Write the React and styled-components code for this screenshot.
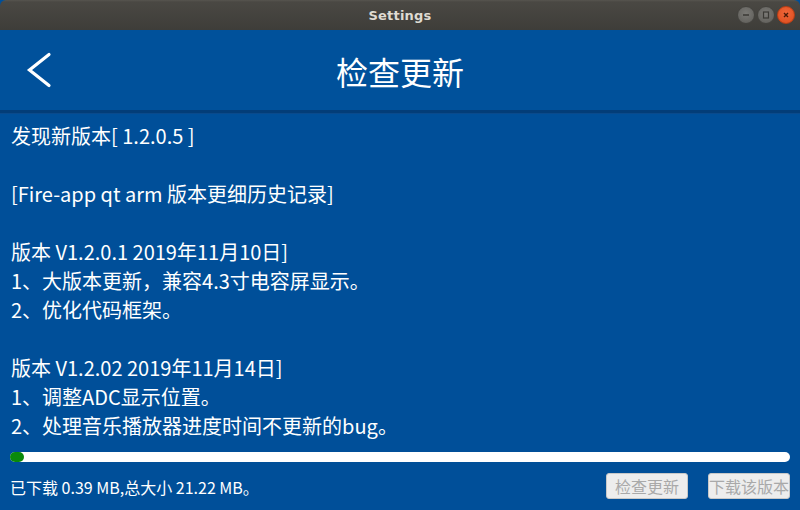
import React from "react";
import styled, { createGlobalStyle } from "styled-components";

const Global = createGlobalStyle`
  html, body { margin: 0; padding: 0; background: #004f99; }
  #root { width: 800px; height: 510px; overflow: hidden; }
`;

const Window = styled.div`
  width: 800px;
  height: 510px;
  display: flex;
  flex-direction: column;
  background: #004f99;
  font-family: "Noto Sans CJK SC", "Noto Sans", sans-serif;
`;

const TitleBar = styled.div`
  height: 30px;
  flex: none;
  display: flex;
  align-items: center;
  justify-content: center;
  position: relative;
  background: linear-gradient(#57554f 0px, #4a4843 2px, #3e3d39 30px);
  border-radius: 6px 6px 0 0;
`;

const TitleText = styled.span`
  font-family: "DejaVu Sans", sans-serif;
  font-weight: bold;
  font-size: 13px;
  color: #dfdbd2;
  letter-spacing: 0.2px;
`;

const Controls = styled.div`
  position: absolute;
  right: 5px;
  top: 6px;
  display: flex;
  gap: 2px;
`;

const Ctl = styled.div`
  width: 18px;
  height: 18px;
  border-radius: 50%;
  background: ${(p) => (p.$close ? "radial-gradient(circle at 50% 40%, #f0673a, #dc4b1c)" : "radial-gradient(circle at 50% 40%, #7a7975, #5d5c58)")};
  border: 1px solid ${(p) => (p.$close ? "#b93e15" : "#43423e")};
  box-sizing: border-box;
  display: flex;
  align-items: center;
  justify-content: center;
`;

const Header = styled.div`
  height: 80px;
  flex: none;
  background: #00519b;
  position: relative;
  display: flex;
  align-items: center;
  justify-content: center;
  border-bottom: 3px solid #033d78;
`;

const Back = styled.div`
  position: absolute;
  left: 26px;
  top: 22px;
  width: 26px;
  height: 36px;
`;

const HeaderTitle = styled.div`
  color: #ffffff;
  font-size: 32px;
  line-height: 1;
  margin-top: 1px;
`;

const Content = styled.div`
  flex: 1;
  padding: 7px 11px 0;
  color: #ffffff;
  font-size: 20px;
  line-height: 29px;
  background: #004f99;
  border-top: 1px solid #0a4a8c;
`;

const Line = styled.div`
  height: 29px;
  white-space: pre;
`;

const Footer = styled.div`
  flex: none;
  padding: 0 10px 10px;
  display: flex;
  flex-direction: column;
  gap: 10px;
`;

const Track = styled.div`
  height: 10px;
  border-radius: 5px;
  background: #ffffff;
  position: relative;
`;

const Fill = styled.div`
  height: 10px;
  border-radius: 5px;
  background: #0a8a0a;
`;

const Row = styled.div`
  display: flex;
  align-items: center;
  height: 28px;
`;

const Status = styled.div`
  flex: 1;
  color: #ffffff;
  font-size: 16px;
  padding-top: 1px;
`;

const Btn = styled.div`
  width: 82px;
  height: 26px;
  box-sizing: border-box;
  margin-left: ${(p) => p.$gap || 0}px;
  background: #ededed;
  border: 1px solid #c8c8c8;
  border-radius: 3px;
  color: #a9a9a9;
  font-size: 16px;
  display: flex;
  align-items: center;
  justify-content: center;
  white-space: nowrap;
  overflow: hidden;
`;

const lines = [
  "发现新版本[ 1.2.0.5 ]",
  "",
  "[Fire-app qt arm 版本更细历史记录]",
  "",
  "版本 V1.2.0.1 2019年11月10日]",
  "1、大版本更新，兼容4.3寸电容屏显示。",
  "2、优化代码框架。",
  "",
  "版本 V1.2.02 2019年11月14日]",
  "1、调整ADC显示位置。",
  "2、处理音乐播放器进度时间不更新的bug。",
];

export default function App() {
  return (
    <>
      <Global />
      <Window>
        <TitleBar>
          <TitleText>Settings</TitleText>
          <Controls>
            <Ctl>
              <svg width="10" height="10" viewBox="0 0 10 10">
                <line x1="2" y1="5" x2="8" y2="5" stroke="#3a3935" strokeWidth="1.5" />
              </svg>
            </Ctl>
            <Ctl>
              <svg width="10" height="10" viewBox="0 0 10 10">
                <rect x="2.5" y="2" width="5" height="6" fill="none" stroke="#3a3935" strokeWidth="1.2" />
              </svg>
            </Ctl>
            <Ctl $close>
              <svg width="10" height="10" viewBox="0 0 10 10">
                <path d="M3 3 L7 7 M7 3 L3 7" stroke="#4a1a08" strokeWidth="1.4" />
              </svg>
            </Ctl>
          </Controls>
        </TitleBar>
        <Header>
          <Back>
            <svg width="26" height="36" viewBox="0 0 26 36">
              <path d="M23 2.5 L3.5 18 L23 33.5" fill="none" stroke="#ffffff" strokeWidth="3.2" strokeLinecap="round" strokeLinejoin="miter" />
            </svg>
          </Back>
          <HeaderTitle>检查更新</HeaderTitle>
        </Header>
        <Content>
          {lines.map((t, i) => (
            <Line key={i}>{t}</Line>
          ))}
        </Content>
        <Footer>
          <Track>
            <Fill style={{ width: `${Math.max(10, (0.39 / 21.22) * 780)}px` }} />
          </Track>
          <Row>
            <Status>已下载 0.39 MB,总大小 21.22 MB。</Status>
            <Btn>检查更新</Btn>
            <Btn $gap={20}>下载该版本</Btn>
          </Row>
        </Footer>
      </Window>
    </>
  );
}
